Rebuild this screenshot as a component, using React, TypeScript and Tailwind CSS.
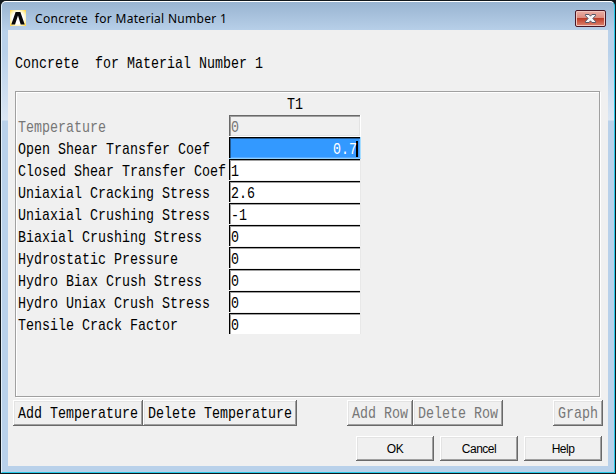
import type { ReactNode } from "react";

const rows = [
  { label: "Temperature", value: "0", state: "disabled" },
  { label: "Open Shear Transfer Coef", value: "0.7", state: "selected" },
  { label: "Closed Shear Transfer Coef", value: "1", state: "normal" },
  { label: "Uniaxial Cracking Stress", value: "2.6", state: "normal" },
  { label: "Uniaxial Crushing Stress", value: "-1", state: "normal" },
  { label: "Biaxial Crushing Stress", value: "0", state: "normal" },
  { label: "Hydrostatic Pressure", value: "0", state: "normal" },
  { label: "Hydro Biax Crush Stress", value: "0", state: "normal" },
  { label: "Hydro Uniax Crush Stress", value: "0", state: "normal" },
  { label: "Tensile Crack Factor", value: "0", state: "normal" },
];

function Mono({ children, className = "" }: { children: ReactNode; className?: string }) {
  return (
    <span
      className={`block origin-center translate-y-px scale-y-[1.2] whitespace-pre font-['Liberation_Mono',monospace] text-[13.33px] leading-4 ${className}`}
    >
      {children}
    </span>
  );
}

const bevel =
  "flex shrink-0 items-center justify-center bg-[#f0f0f0] shadow-[inset_-1px_-1px_#696969,inset_1px_1px_#ffffff,inset_-2px_-2px_#a0a0a0,inset_2px_2px_#e3e3e3]";

function GridButton({ label, className, disabled = false }: { label: string; className: string; disabled?: boolean }) {
  return (
    <button className={`${bevel} h-[26px] ${disabled ? "text-[#777777]" : "text-black"} ${className}`}>
      <Mono>{label}</Mono>
    </button>
  );
}

function DialogButton({ label }: { label: string }) {
  return (
    <button className={`${bevel} h-[25px] w-[78px] font-['Liberation_Sans',sans-serif] text-[12px] tracking-[-0.5px] text-black`}>
      {label}
    </button>
  );
}

function Field({ value, state }: { value: string; state: string }) {
  if (state === "disabled") {
    return (
      <div className="flex h-[22px] w-[132px] items-center bg-[#f0f0f0] pl-[2px] pt-[2px] text-[#777777] shadow-[inset_0_-1px_#ffffff,inset_-1px_0_#ffffff,inset_1px_1px_#696969,inset_2px_2px_#a0a0a0,inset_-2px_-2px_#e3e3e3]">
        <Mono>{value}</Mono>
      </div>
    );
  }
  if (state === "selected") {
    return (
      <div className="flex h-[22px] w-[132px] items-center justify-end bg-[#3399ff] pr-[3px] pt-[2px] text-white shadow-[inset_0_-1px_#8fd0ff,inset_-1px_0_#a5dcff,inset_1px_1px_#000000,inset_2px_2px_#235b94,inset_-2px_-2px_#59aaff]">
        <Mono>{value}</Mono>
        <span className="-ml-px h-[16px] w-[2px] bg-black" />
      </div>
    );
  }
  return (
    <div className="flex h-[22px] w-[132px] items-center bg-white pl-[2px] pt-[2px] text-black shadow-[inset_0_-1px_#f0f0f0,inset_-1px_0_#e8e8e8,inset_1px_1px_#000000,inset_2px_2px_#a0a0a0]">
      <Mono>{value}</Mono>
    </div>
  );
}

function AppIcon() {
  return (
    <svg width="16" height="16" viewBox="0 0 16 16">
      <defs>
        <radialGradient id="gold" r="0.7">
          <stop offset="0.5" stopColor="#ffffff" />
          <stop offset="0.72" stopColor="#fff3b2" />
          <stop offset="1" stopColor="#ffcf38" />
        </radialGradient>
      </defs>
      <rect width="16" height="16" fill="url(#gold)" />
      <path d="M1.3 14.5 5.6 2h4.8l4.3 12.5h-4L8 5.5 5 14.5z" fill="#080808" />
    </svg>
  );
}

function CloseButton() {
  return (
    <button className="h-[17px] w-[31px]">
      <svg width="31" height="17" viewBox="0 0 31 17">
        <defs>
          <linearGradient id="close" x1="0" y1="0" x2="0" y2="1">
            <stop offset="0" stopColor="#e8a99f" />
            <stop offset="0.48" stopColor="#dc8b7e" />
            <stop offset="0.5" stopColor="#bd3d29" />
            <stop offset="1" stopColor="#d97a65" />
          </linearGradient>
        </defs>
        <rect x="0.5" y="0.5" width="30" height="16" rx="1.5" fill="#f1c5bd" stroke="#481726" />
        <rect x="2" y="2" width="27" height="13" fill="url(#close)" />
        <path
          d="M10.5 4.5h3.6l1.4 1.7 1.4-1.7h3.6v1.2l-2.6 2.8 2.6 2.8v1.2h-3.6l-1.4-1.7-1.4 1.7h-3.6v-1.2l2.6-2.8-2.6-2.8z"
          fill="#f6f6f8"
          stroke="#535666"
        />
      </svg>
    </button>
  );
}

export default function App() {
  return (
    <div className="h-[474px] w-[616px] overflow-hidden bg-[#11171c] pb-px pl-px pr-px pt-px">
      <div className="flex h-[472px] w-[614px] flex-col rounded-t-[5px] border-b border-l border-r border-t border-b-[#28c9e8] border-l-[#e3eff8] border-r-[#28c9e8] border-t-white bg-[#b9d1ea] bg-[linear-gradient(#99b4d1_0px,#b9d1ea_30px,#b9d1ea_50px,#dbe7f4_118px,#b9d1ea_119px,#b9d1ea_100%)]">
        <header className="flex h-[28px] shrink-0 items-start justify-between pl-2 pr-2 pt-2">
          <div className="flex items-start">
            <AppIcon />
            <h1 className="ml-[9px] mt-px whitespace-pre font-['Noto_Sans',sans-serif] text-[12px] leading-4 tracking-[0.3px] text-black">
              {"Concrete  for Material Number 1"}
            </h1>
          </div>
          <CloseButton />
        </header>
        <main className="ml-[6px] h-[436px] w-[600px] shrink-0 bg-[#f0f0f0] pl-[5px] pt-[25px] text-black">
          <Mono className="pl-[2px]">{"Concrete  for Material Number 1"}</Mono>
          <section className="ml-[2px] mt-5 h-[306px] w-[585px] border border-[#a0a0a0] pl-[2px] pt-[5px] shadow-[inset_1px_1px_#ffffff,1px_1px_#ffffff]">
            <div className="flex h-[18px] w-[342px] justify-end">
              <div className="flex w-[130px] justify-center">
                <Mono>T1</Mono>
              </div>
            </div>
            {rows.map((row) => (
              <div key={row.label} className="flex h-[22px]">
                <div className={`w-[211px] shrink-0 pt-1 ${row.state === "disabled" ? "text-[#777777]" : ""}`}>
                  <Mono>{row.label}</Mono>
                </div>
                <Field value={row.value} state={row.state} />
              </div>
            ))}
          </section>
          <div className="mt-[3px] flex">
            <GridButton label="Add Temperature" className="w-[130px]" />
            <GridButton label="Delete Temperature" className="w-[154px]" />
            <GridButton label="Add Row" className="ml-[50px] w-[66px]" disabled />
            <GridButton label="Delete Row" className="w-[90px]" disabled />
            <GridButton label="Graph" className="ml-[50px] w-[50px]" disabled />
          </div>
          <div className="ml-[343px] mt-[10px] flex gap-[6px]">
            <DialogButton label="OK" />
            <DialogButton label="Cancel" />
            <DialogButton label="Help" />
          </div>
        </main>
      </div>
    </div>
  );
}
